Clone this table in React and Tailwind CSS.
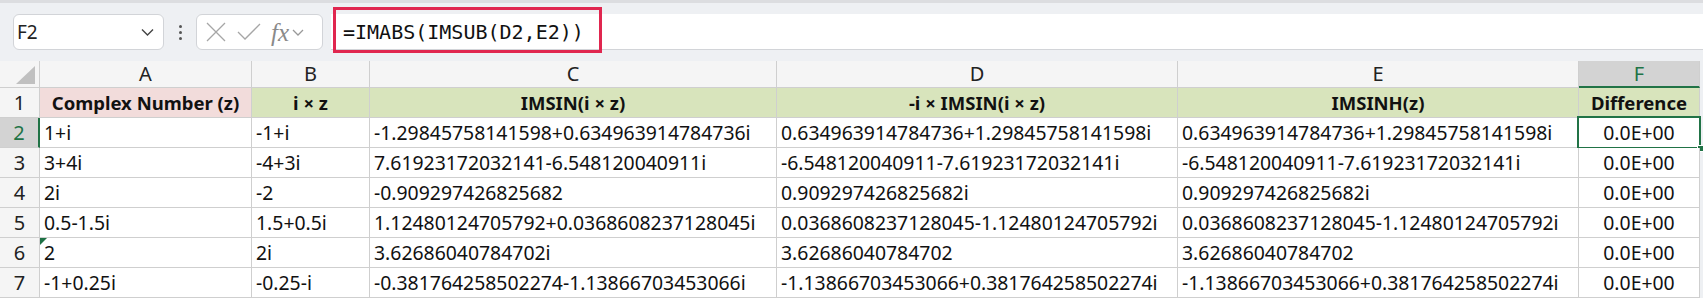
import React from "react";

const cols = ["A", "B", "C", "D", "E", "F"];

const headers = [
  "Complex Number (z)",
  "i × z",
  "IMSIN(i × z)",
  "-i × IMSIN(i × z)",
  "IMSINH(z)",
  "Difference",
];

const rows = [
  ["1+i", "-1+i", "-1.29845758141598+0.634963914784736i", "0.634963914784736+1.29845758141598i", "0.634963914784736+1.29845758141598i"],
  ["3+4i", "-4+3i", "7.61923172032141-6.548120040911i", "-6.548120040911-7.61923172032141i", "-6.548120040911-7.61923172032141i"],
  ["2i", "-2", "-0.909297426825682", "0.909297426825682i", "0.909297426825682i"],
  ["0.5-1.5i", "1.5+0.5i", "1.12480124705792+0.0368608237128045i", "0.0368608237128045-1.12480124705792i", "0.0368608237128045-1.12480124705792i"],
  ["2", "2i", "3.62686040784702i", "3.62686040784702", "3.62686040784702"],
  ["-1+0.25i", "-0.25-i", "-0.381764258502274-1.13866703453066i", "-1.13866703453066+0.381764258502274i", "-1.13866703453066+0.381764258502274i"],
];

const gridCols = "grid grid-cols-[40px_212px_118px_407px_401px_401px_121px_3px]";
const cellFont = "font-['Noto_Sans',sans-serif] text-[19.4px] text-[#111]";

export default function App() {
  return (
    <div className="w-[1703px] h-[298px] overflow-hidden bg-[#eef0f3] font-['Noto_Sans',sans-serif]">
      {/* Formula bar */}
      <div className="h-[61px] border-t-[3px] border-[#dcdde0] flex items-center">
        <div className="ml-[13px] w-[151px] h-[36px] bg-white border border-[#d2d4d8] rounded-md flex items-center justify-between pl-[3px] pr-[8px]">
          <span className="text-[19px] text-[#222]">F2</span>
          <svg width="15" height="10" viewBox="0 0 15 10" fill="none" stroke="#444" strokeWidth="1.4">
            <path d="M2 2.5 L7.5 8 L13 2.5" />
          </svg>
        </div>
        <div className="w-[32px] flex flex-col items-center gap-[3px]">
          <span className="w-[3px] h-[3px] rounded-full bg-[#555]" />
          <span className="w-[3px] h-[3px] rounded-full bg-[#555]" />
          <span className="w-[3px] h-[3px] rounded-full bg-[#555]" />
        </div>
        <div className="w-[127px] h-[36px] bg-white border border-[#d2d4d8] rounded-md flex items-center pl-[8px] gap-[10px]">
          <svg width="22" height="22" viewBox="0 0 22 22" fill="none" stroke="#a6a6a6" strokeWidth="1.3">
            <path d="M2 2 L20 20 M20 2 L2 20" />
          </svg>
          <svg width="24" height="18" viewBox="0 0 24 18" fill="none" stroke="#a6a6a6" strokeWidth="1.3">
            <path d="M1 9 L8 16 L23 1" />
          </svg>
          <div className="flex items-center gap-[3px]">
            <span className="font-['Liberation_Serif',serif] italic text-[25px] text-[#8a8a8a] leading-none">fx</span>
            <svg width="12" height="8" viewBox="0 0 12 8" fill="none" stroke="#999" strokeWidth="1.3">
              <path d="M1 2 L6 7 L11 2" />
            </svg>
          </div>
        </div>
        <div className="ml-[8px] flex-1 h-[36px] bg-white border-b border-[#d2d4d8] relative flex items-center">
          <div className="absolute left-[2px] top-[-7px] w-[269px] h-[46px] border-[3px] border-[#e0264f]" />
          <span className="ml-[12px] font-['DejaVu_Sans_Mono',monospace] text-[20px] text-[#111]">=IMABS(IMSUB(D2,E2))</span>
        </div>
      </div>

      {/* Grid */}
      <div className={gridCols}>
        {/* column header row */}
        <div className="relative h-[27px] bg-[#f5f5f5] border-r border-b border-[#cfcfcf]">
          <div className="absolute right-[4px] bottom-[3px] w-0 h-0 border-l-[19px] border-l-transparent border-b-[18px] border-b-[#c0c0c0]" />
        </div>
        {cols.map((c) =>
          c === "F" ? (
            <div key={c} className="h-[27px] bg-[#d3d3d3] border-r border-[#cfcfcf] border-b-2 border-b-[#217346] flex items-center justify-center text-[20px] text-[#217346]">
              {c}
            </div>
          ) : (
            <div key={c} className="h-[27px] bg-[#f5f5f5] border-r border-b border-[#cfcfcf] flex items-center justify-center text-[20px] text-[#222]">
              {c}
            </div>
          )
        )}
        <div className="h-[27px] bg-[#eef0f3]" />

        {/* row 1 headers */}
        <div className="h-[30px] bg-[#f5f5f5] border-r border-b border-[#cfcfcf] flex items-center justify-center text-[20px] text-[#222]">1</div>
        {headers.map((h, i) => (
          <div
            key={h}
            className={`h-[30px] border-r border-b border-[#cfcfcf] flex items-center justify-center font-bold font-['Noto_Sans',sans-serif] text-[18.5px] text-[#111] ${i === 0 ? "bg-[#f2dcdb]" : "bg-[#d8e4bc]"}`}
          >
            {h}
          </div>
        ))}
        <div className="h-[30px] bg-[#eef0f3]" />

        {rows.map((r, ri) => {
          const n = ri + 2;
          const sel = n === 2;
          return (
            <React.Fragment key={n}>
              <div
                className={`h-[30px] border-b border-[#cfcfcf] flex items-center justify-center text-[20px] ${sel ? "bg-[#d3d3d3] text-[#217346] border-r-2 border-r-[#217346]" : "bg-[#f5f5f5] text-[#222] border-r"}`}
              >
                {n}
              </div>
              {r.map((v, ci) => (
                <div
                  key={ci}
                  className={`relative h-[30px] bg-white border-r border-b border-[#cfcfcf] flex items-center pl-[4px] whitespace-nowrap overflow-hidden ${cellFont}`}
                >
                  {n === 6 && ci === 0 && (
                    <div className="absolute left-0 top-0 w-0 h-0 border-t-[7px] border-t-[#1e7145] border-r-[7px] border-r-transparent" />
                  )}
                  {v}
                </div>
              ))}
              <div className={`relative h-[30px] bg-white border-r border-b border-[#cfcfcf] flex items-center justify-center ${cellFont}`}>
                {sel && (
                  <>
                    <div className="absolute left-[-2px] top-[-2px] right-[-2px] bottom-[-2px] border-2 border-[#217346]" />
                    <div className="absolute right-[-5px] bottom-[-5px] w-[7px] h-[7px] bg-[#217346] border border-white" />
                  </>
                )}
                0.0E+00
              </div>
              <div className="h-[30px] bg-[#eef0f3]" />
            </React.Fragment>
          );
        })}
      </div>
    </div>
  );
}
